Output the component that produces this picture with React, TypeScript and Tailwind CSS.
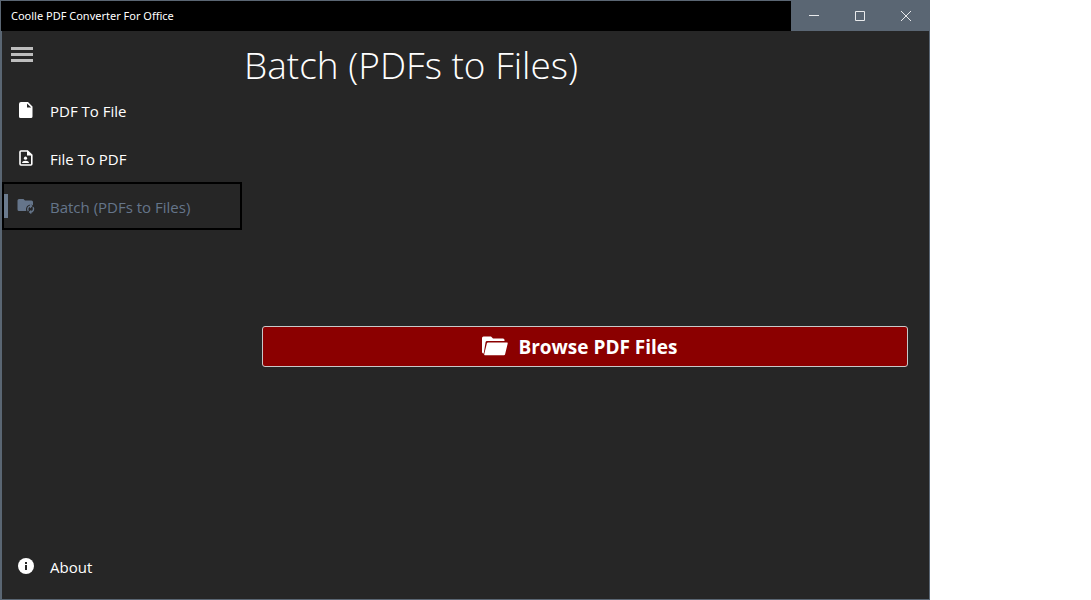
import type { ReactNode } from "react";

const FileIcon = () => (
  <svg width="16" height="16" viewBox="0 0 16 16" fill="currentColor" aria-hidden="true">
    <path fillRule="evenodd" d="M3 0h7l4.500 4.500V14.500a1.500 1.500 0 0 1-1.500 1.500H2.500A1.500 1.500 0 0 1 1 14.500V2a2 2 0 0 1 2-2zM9 1.500V5.500h4.200z" />
  </svg>
);

const FilePersonIcon = () => (
  <svg width="16" height="16" viewBox="0 0 16 16" fill="none" aria-hidden="true">
    <path d="M3 1h6.500L13.800 5.200V14a1 1 0 0 1-1 1H3a1 1 0 0 1-1-1V2a1 1 0 0 1 1-1z" stroke="currentColor" strokeWidth="1.600" />
    <path d="M9 0.500V5.500h5z" fill="currentColor" />
    <circle cx="7.500" cy="8.200" r="1.600" fill="currentColor" />
    <path d="M4 13c0-3 7-3 7 0z" fill="currentColor" />
  </svg>
);

const FolderSyncIcon = () => (
  <svg width="18" height="16" viewBox="0 0 18 16" fill="none" aria-hidden="true">
    <path d="M2 1h4.500L8 2.500h6.500A1.500 1.500 0 0 1 16 4v3.200C11.500 5.500 8.200 8.500 9.300 13H2a1.500 1.500 0 0 1-1.500-1.500v-9A1.500 1.500 0 0 1 2 1z" fill="currentColor" />
    <path d="M13.700 8a3.200 3.200 0 0 0-2.400 5M13.600 14.200a3.200 3.200 0 0 0 2.400-5" stroke="currentColor" strokeWidth="1.400" />
    <path d="M13 5.800v4.600l2.700-2.300zM14.300 11.700V16.300L11.600 14z" fill="currentColor" />
  </svg>
);

const InfoIcon = () => (
  <svg width="16" height="16" viewBox="0 0 16 16" aria-hidden="true">
    <circle cx="8" cy="8" r="8" fill="currentColor" />
    <path d="M7 4h2v2H7zM7 7h2v5H7z" fill="#262626" />
  </svg>
);

const FolderOpenIcon = () => (
  <svg width="26" height="20" viewBox="0 0 26 20" aria-hidden="true">
    <path d="M1.500 0.500h7.500l2 2h10a1.500 1.500 0 0 1 1.500 1.500V5H5a1.500 1.500 0 0 0-1.400 1.100L1.700 17.500A1.500 1.500 0 0 1 0 16V2A1.500 1.500 0 0 1 1.500 0.500z" fill="currentColor" />
    <path d="M6 6.500h19a0.700 0.700 0 0 1 .7.900l-2.600 10.800a1.200 1.200 0 0 1-1.200 1H2.700a0.700 0.700 0 0 1-.5-.9L4.900 7.300A1.200 1.200 0 0 1 6 6.500z" fill="currentColor" />
  </svg>
);

type NavItemProps = {
  icon: ReactNode;
  label: string;
  selected?: boolean;
};

const NavItem = ({ icon, label, selected }: NavItemProps) => (
  <button
    type="button"
    aria-current={selected ? "page" : undefined}
    className={
      selected
        ? "flex h-12 w-full items-center border-2 border-black text-left text-[#65758a]"
        : "flex h-12 w-full items-center border-2 border-transparent text-left text-white"
    }
  >
    {selected && <span className="h-6 w-1 bg-[#6b7b8e]" />}
    <span className={selected ? "flex w-9 justify-center" : "ml-1 flex w-9 justify-center"}>{icon}</span>
    <span className="ml-1.5 pt-0.5 text-[15px] leading-5">{label}</span>
  </button>
);

const TitleBar = () => (
  <header className="flex h-[30px] shrink-0 items-stretch bg-black text-white">
    <h1 className="flex grow items-center pl-2.5 font-['Noto_Sans',sans-serif] text-[11px]">Coolle PDF Converter For Office</h1>
    <div className="flex bg-[#5a6673] text-[#e8eaec]">
      <button type="button" aria-label="Minimize" className="flex w-[46px] items-center justify-center">
        <svg width="10" height="10" shapeRendering="crispEdges"><path d="M0 4.500h10" stroke="currentColor" /></svg>
      </button>
      <button type="button" aria-label="Maximize" className="flex w-[46px] items-center justify-center">
        <svg width="10" height="10" fill="none"><path d="M.5.5h9v9h-9z" stroke="currentColor" /></svg>
      </button>
      <button type="button" aria-label="Close" className="flex w-[46px] items-center justify-center">
        <svg width="10" height="10"><path d="M0 0l10 10M10 0L0 10" stroke="currentColor" /></svg>
      </button>
    </div>
  </header>
);

const Sidebar = () => (
  <nav className="flex w-[243px] shrink-0 flex-col border-l border-[#5a6673] pb-[9px]">
    <button type="button" aria-label="Menu" className="mt-4 ml-[9px] flex w-[22px] flex-col gap-[3px]">
      <span className="h-[3px] w-full bg-[#bdbdbd]" />
      <span className="h-[3px] w-full bg-[#bdbdbd]" />
      <span className="h-[3px] w-full bg-[#bdbdbd]" />
    </button>
    <div className="mt-6 mr-0.5">
      <NavItem icon={<FileIcon />} label="PDF To File" />
      <NavItem icon={<FilePersonIcon />} label="File To PDF" />
      <NavItem icon={<FolderSyncIcon />} label="Batch (PDFs to Files)" selected />
    </div>
    <div className="mt-auto mr-0.5">
      <NavItem icon={<InfoIcon />} label="About" />
    </div>
  </nav>
);

export default function App() {
  return (
    <div className="min-h-screen bg-white font-['Open_Sans','Noto_Sans',sans-serif]">
      <div className="flex min-h-screen w-full max-w-[930px] flex-col border border-[#5a6673] bg-[#262626]">
        <TitleBar />
        <div className="flex grow">
          <Sidebar />
          <main className="flex min-w-0 grow flex-col">
            <h2 className="pt-2 text-[37px] leading-[52px] font-light text-white">Batch (PDFs to Files)</h2>
            <div className="flex grow items-center pt-0.5 pr-[21px] pl-[18px]">
              <button
                type="button"
                className="flex h-[41px] w-full items-center justify-center gap-2.5 rounded-[3px] border border-[#c8c8c8] bg-[#8b0000] pr-2.5 text-white"
              >
                <FolderOpenIcon />
                <span className="pt-0.5 text-[19px] leading-6 font-bold">Browse PDF Files</span>
              </button>
            </div>
          </main>
        </div>
      </div>
    </div>
  );
}
